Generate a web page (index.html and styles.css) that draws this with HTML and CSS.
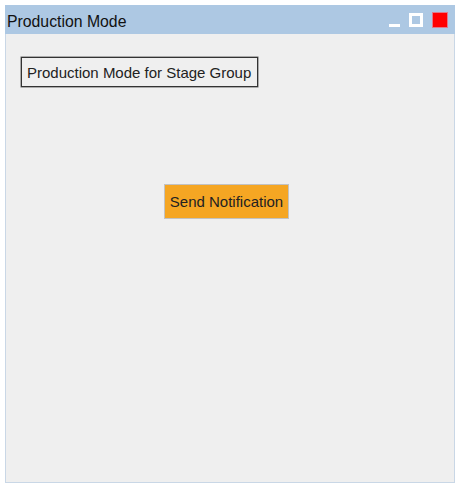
FILE: index.html
```html
<!DOCTYPE html>
<html>
<head>
<meta charset="utf-8">
<link rel="stylesheet" href="styles.css">
</head>
<body>
<div class="window">
  <div class="titlebar">
    <span class="title">Production Mode</span>
    <div class="controls">
      <span class="btn-min"></span>
      <span class="btn-max"></span>
      <span class="btn-close"></span>
    </div>
  </div>
  <div class="content">
    <div class="label">Production Mode for Stage Group</div>
    <div class="center">
      <button class="notify">Send Notification</button>
    </div>
  </div>
</div>
</body>
</html>
```
FILE: styles.css
```css
html, body { margin: 0; padding: 0; background: #fff; }
body { padding: 5px; font-family: "Liberation Sans", Arial, sans-serif; }
.window {
  width: 450px;
  height: 478px;
  box-sizing: border-box;
  display: flex;
  flex-direction: column;
  background: #efefef;
  border: 1px solid #c9d7e6;
}
.titlebar {
  height: 29px;
  box-sizing: border-box;
  margin: -1px -1px 0 -1px;
  background: #adc8e3;
  display: flex;
  align-items: center;
  justify-content: space-between;
  padding: 4px 7px 0 2px;
}
.title { font-size: 15.8px; color: #111; }
.controls { display: flex; align-items: center; gap: 9px; margin-top: -3px; }
.btn-min {
  width: 11px; height: 3px; background: #fff; margin-top: 11px;
}
.btn-max {
  width: 14px; height: 14px; box-sizing: border-box;
  border: 3px solid #fff;
}
.btn-close {
  width: 16px; height: 16px; box-sizing: border-box;
  background: #ff0000; border: 1px solid #e07a8a;
}
.content { flex: 1; padding: 23px 15px; }
.label {
  width: fit-content;
  border: 1px solid #333;
  box-shadow: 0 0 0 0.5px #666;
  padding: 6px 6px 5px 5px;
  font-size: 15px;
  line-height: 17px;
  color: #222;
}
.center { display: flex; justify-content: center; margin-top: 97px; padding-right: 7px; }
.notify {
  background: #f5a623;
  border: 1px solid #c2c2c2;
  font-family: "Liberation Sans", Arial, sans-serif;
  font-size: 15px;
  color: #222;
  padding: 0;
  white-space: nowrap;
  width: 125px;
  height: 35px;
}
```
